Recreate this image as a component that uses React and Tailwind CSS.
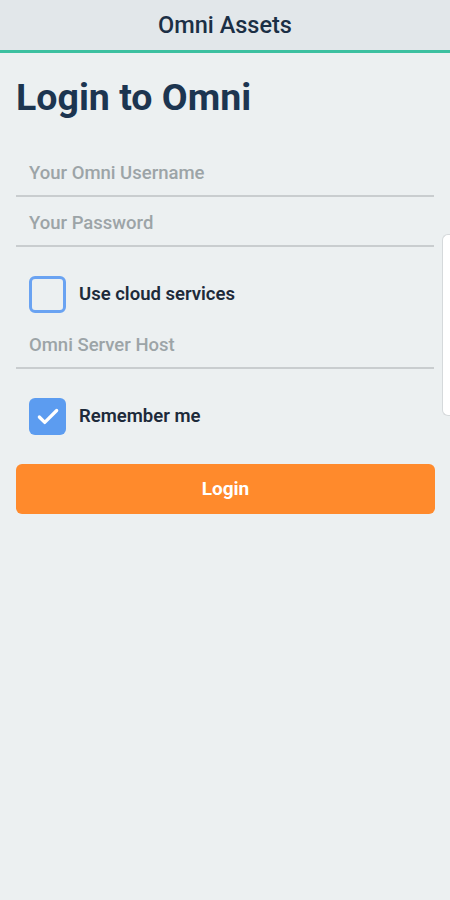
import { Check } from 'lucide-react'

function Field({ placeholder }) {
  return (
    <div className="h-[50px] border-b-2 border-[#c9cdcf] flex items-end pb-[13px] pl-[13px]">
      <span className="text-[18.5px] font-medium text-[#9ca4a7] leading-none">{placeholder}</span>
    </div>
  )
}

function CheckRow({ label, checked }) {
  return (
    <div className="flex items-center gap-[13px] pl-[13px]">
      {checked ? (
        <div className="w-[37px] h-[37px] rounded-[6px] bg-[#5c9cf0] flex items-center justify-center">
          <Check size={26} strokeWidth={3} className="text-white" />
        </div>
      ) : (
        <div className="w-[37px] h-[37px] rounded-[6px] border-[3px] border-[#6aa3f2]" />
      )}
      <span className="text-[18.5px] font-semibold text-[#1d2a3a]">{label}</span>
    </div>
  )
}

export default function App() {
  return (
    <div className="relative w-[450px] h-[900px] bg-[#ecf0f1] font-['Roboto',sans-serif] overflow-hidden">
      {/* Header */}
      <div className="h-[53px] bg-[#e2e7ea] border-b-[3px] border-[#3cc0a0] flex items-center justify-center">
        <span className="text-[23.5px] font-medium text-[#1b2f45] mt-[1px]">Omni Assets</span>
      </div>

      <div className="px-4">
        <h1 className="mt-[20px] text-[37.5px] font-bold text-[#1c3550] leading-[48px]">Login to Omni</h1>

        <div className="mt-[26px]">
          <Field placeholder="Your Omni Username" />
          <Field placeholder="Your Password" />
        </div>

        <div className="mt-[29px]">
          <CheckRow label="Use cloud services" />
        </div>

        <div className="mt-[6px]">
          <Field placeholder="Omni Server Host" />
        </div>

        <div className="mt-[29px]">
          <CheckRow label="Remember me" checked />
        </div>

        <button className="mt-[29px] w-[419px] h-[50px] rounded-[6px] bg-[#ff8a2c] text-white text-[19px] font-bold flex items-center justify-center">
          Login
        </button>
      </div>

      {/* side drawer handle */}
      <div className="absolute right-0 top-[234px] w-[8px] h-[182px] bg-white border border-r-0 border-[#d5d9db] rounded-l-[6px]" />
    </div>
  )
}
